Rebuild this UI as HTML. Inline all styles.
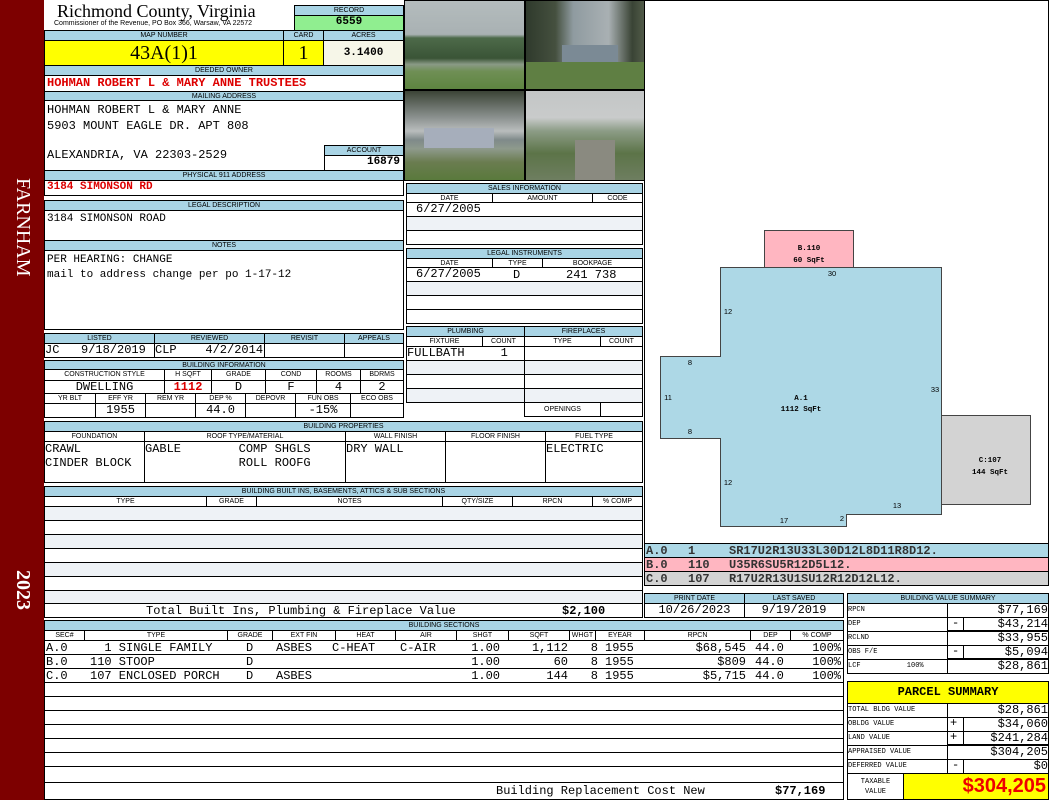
<!DOCTYPE html>
<html><head><meta charset="utf-8"><style>
*{margin:0;padding:0;box-sizing:border-box}
body{width:1050px;height:800px;position:relative;background:#fff;overflow:hidden;font-family:"Liberation Mono",monospace}
div{position:absolute}
.h{background:#a9d4e5;border:1px solid #000;font:7px/9px "Liberation Sans",sans-serif;text-align:center;color:#000;letter-spacing:0}
.c{border:1px solid #000;font-size:11px;line-height:13px;white-space:nowrap}
.r{color:#d00;font-weight:bold}
.s{background:#eef2f6}
.m{font:7px "Liberation Mono",monospace}
.rt{text-align:right}
.ct{text-align:center}
.v{font-size:12px;line-height:14px;white-space:pre}
</style></head><body>
<div style="left:0;top:0;width:44px;height:800px;background:#7d0000"></div>
<div style="left:10px;top:178px;width:24px;height:156px;color:#fff;font:20px 'Liberation Serif',serif;writing-mode:vertical-rl;">FARNHAM</div>
<div style="left:10px;top:570px;width:24px;height:56px;color:#fff;font:bold 20px 'Liberation Serif',serif;writing-mode:vertical-rl;">2023</div>

<div style="left:57px;top:1px;font:18px/20px 'Liberation Serif',serif">Richmond County, Virginia</div>
<div style="left:54px;top:19px;font:7px/9px 'Liberation Sans',sans-serif">Commissioner of the Revenue, PO Box 366, Warsaw, VA 22572</div>
<div class="h" style="left:294px;top:5px;width:110px;height:11px">RECORD</div>
<div class="c" style="left:294px;top:15px;width:110px;height:16px;background:#90ee90;text-align:center;font-weight:bold">6559</div>

<div class="h" style="left:44px;top:30px;width:240px;height:11px">MAP NUMBER</div>
<div class="h" style="left:283px;top:30px;width:41px;height:11px">CARD</div>
<div class="h" style="left:323px;top:30px;width:81px;height:11px">ACRES</div>
<div class="c" style="left:44px;top:40px;width:240px;height:26px;background:#ffff00;font:20px/24px 'Liberation Serif',serif;text-align:center">43A(1)1</div>
<div class="c" style="left:283px;top:40px;width:41px;height:26px;background:#ffff00;font:20px/24px 'Liberation Serif',serif;text-align:center">1</div>
<div class="c" style="left:323px;top:40px;width:81px;height:26px;background:#f6f6e8;text-align:center;font-weight:bold;line-height:24px">3.1400</div>

<div class="h" style="left:44px;top:65px;width:360px;height:11px">DEEDED OWNER</div>
<div class="c r" style="left:44px;top:75px;width:360px;height:17px;font-size:12px;line-height:15px;padding-left:2px">HOHMAN ROBERT L &amp; MARY ANNE TRUSTEES</div>
<div class="h" style="left:44px;top:91px;width:360px;height:10px">MAILING ADDRESS</div>
<div class="c" style="left:44px;top:100px;width:360px;height:71px"></div>
<div class="v" style="left:47px;top:102px;line-height:16px">HOHMAN ROBERT L &amp; MARY ANNE
5903 MOUNT EAGLE DR. APT 808</div>
<div class="v" style="left:47px;top:148px">ALEXANDRIA, VA 22303-2529</div>
<div class="h" style="left:324px;top:145px;width:80px;height:11px">ACCOUNT</div>
<div class="c" style="left:324px;top:155px;width:80px;height:16px;text-align:right;padding-right:3px;font-weight:bold">16879</div>
<div class="h" style="left:44px;top:170px;width:360px;height:11px">PHYSICAL 911 ADDRESS</div>
<div class="c r" style="left:44px;top:180px;width:360px;height:16px;padding-left:2px">3184 SIMONSON RD</div>

<div class="h" style="left:44px;top:200px;width:360px;height:11px">LEGAL DESCRIPTION</div>
<div class="c" style="left:44px;top:210px;width:360px;height:31px;padding:2px">3184 SIMONSON ROAD</div>
<div class="h" style="left:44px;top:240px;width:360px;height:11px">NOTES</div>
<div class="c" style="left:44px;top:250px;width:360px;height:80px;padding:2px;line-height:15px">PER HEARING: CHANGE<br>mail to address change per po 1-17-12</div>

<div class="h" style="left:44px;top:333px;width:111px;height:11px">LISTED</div>
<div class="h" style="left:154px;top:333px;width:111px;height:11px">REVIEWED</div>
<div class="h" style="left:264px;top:333px;width:81px;height:11px">REVISIT</div>
<div class="h" style="left:344px;top:333px;width:60px;height:11px">APPEALS</div>
<div class="c" style="left:44px;top:343px;width:111px;height:15px;font-size:12px">JC &nbsp;&nbsp;9/18/2019</div>
<div class="c" style="left:154px;top:343px;width:111px;height:15px;font-size:12px">CLP &nbsp;&nbsp;&nbsp;4/2/2014</div>
<div class="c" style="left:264px;top:343px;width:81px;height:15px"></div>
<div class="c" style="left:344px;top:343px;width:60px;height:15px"></div>

<div class="h" style="left:44px;top:360px;width:360px;height:10px">BUILDING INFORMATION</div>
<div class="h" style="left:44px;top:369px;width:121px;height:12px;background:#fff">CONSTRUCTION STYLE</div>
<div class="h" style="left:164px;top:369px;width:48px;height:12px;background:#fff">H SQFT</div>
<div class="h" style="left:211px;top:369px;width:55px;height:12px;background:#fff">GRADE</div>
<div class="h" style="left:265px;top:369px;width:52px;height:12px;background:#fff">COND</div>
<div class="h" style="left:316px;top:369px;width:45px;height:12px;background:#fff">ROOMS</div>
<div class="h" style="left:360px;top:369px;width:44px;height:12px;background:#fff">BDRMS</div>
<div class="c ct" style="left:44px;top:380px;width:121px;height:14px;font-size:12px">DWELLING</div>
<div class="c ct r" style="left:164px;top:380px;width:48px;height:14px;font-size:12px">1112</div>
<div class="c ct" style="left:211px;top:380px;width:55px;height:14px;font-size:12px">D</div>
<div class="c ct" style="left:265px;top:380px;width:52px;height:14px;font-size:12px">F</div>
<div class="c ct" style="left:316px;top:380px;width:45px;height:14px;font-size:12px">4</div>
<div class="c ct" style="left:360px;top:380px;width:44px;height:14px;font-size:12px">2</div>
<div class="h" style="left:44px;top:393px;width:52px;height:11px;background:#fff">YR BLT</div>
<div class="h" style="left:95px;top:393px;width:51px;height:11px;background:#fff">EFF YR</div>
<div class="h" style="left:145px;top:393px;width:51px;height:11px;background:#fff">REM YR</div>
<div class="h" style="left:195px;top:393px;width:51px;height:11px;background:#fff">DEP %</div>
<div class="h" style="left:245px;top:393px;width:51px;height:11px;background:#fff">DEPOVR</div>
<div class="h" style="left:295px;top:393px;width:56px;height:11px;background:#fff">FUN OBS</div>
<div class="h" style="left:350px;top:393px;width:54px;height:11px;background:#fff">ECO OBS</div>
<div class="c" style="left:44px;top:403px;width:52px;height:15px"></div>
<div class="c ct" style="left:95px;top:403px;width:51px;height:15px;font-size:12px">1955</div>
<div class="c" style="left:145px;top:403px;width:51px;height:15px"></div>
<div class="c ct" style="left:195px;top:403px;width:51px;height:15px;font-size:12px">44.0</div>
<div class="c" style="left:245px;top:403px;width:51px;height:15px"></div>
<div class="c ct" style="left:295px;top:403px;width:56px;height:15px;font-size:12px">-15%</div>
<div class="c" style="left:350px;top:403px;width:54px;height:15px"></div>

<div style="left:404px;top:0;width:241px;height:181px;background:#000"></div>
<div style="left:405px;top:1px;width:119px;height:88px;background:linear-gradient(180deg,#b4bcbd 0%,#a9b1b3 38%,#4d6a4a 42%,#3a5436 65%,#8a9a86 72%,#6f8f55 80%,#5e8540 100%)"></div>
<div style="left:526px;top:1px;width:118px;height:88px;background:linear-gradient(90deg,#2f3a2c 0%,#45503f 25%,#8f9ba0 40%,#a9b0b3 70%,#3a4435 90%,#505a48 100%)"></div>
<div style="left:562px;top:45px;width:56px;height:26px;background:#7b8a95"></div>
<div style="left:526px;top:62px;width:118px;height:27px;background:#5f7f43"></div>
<div style="left:405px;top:91px;width:119px;height:89px;background:linear-gradient(180deg,#3c4436 0%,#8c9290 30%,#b9bdbd 45%,#7f8a8a 55%,#8e9a8c 65%,#6a7c50 80%,#5a7a3c 100%)"></div>
<div style="left:424px;top:128px;width:70px;height:20px;background:#a6aebb"></div>
<div style="left:526px;top:91px;width:118px;height:89px;background:linear-gradient(180deg,#c3c6c6 0%,#c9cbcb 30%,#8c9c86 45%,#5c7448 70%,#6e7e60 100%)"></div>
<div style="left:575px;top:140px;width:40px;height:40px;background:#8a8a80"></div>

<div class="h" style="left:406px;top:183px;width:237px;height:11px">SALES INFORMATION</div>
<div class="h" style="left:406px;top:193px;width:87px;height:10px;background:#fff">DATE</div>
<div class="h" style="left:492px;top:193px;width:101px;height:10px;background:#fff">AMOUNT</div>
<div class="h" style="left:592px;top:193px;width:51px;height:10px;background:#fff">CODE</div>
<div class="c" style="left:406px;top:202px;width:237px;height:15px;padding-left:9px;font-size:12px">6/27/2005</div>
<div class="c s" style="left:406px;top:216px;width:237px;height:15px"></div>
<div class="c" style="left:406px;top:230px;width:237px;height:15px"></div>
<div class="h" style="left:406px;top:248px;width:237px;height:11px">LEGAL INSTRUMENTS</div>
<div class="h" style="left:406px;top:258px;width:87px;height:10px;background:#fff">DATE</div>
<div class="h" style="left:492px;top:258px;width:51px;height:10px;background:#fff">TYPE</div>
<div class="h" style="left:542px;top:258px;width:101px;height:10px;background:#fff">BOOKPAGE</div>
<div class="c" style="left:406px;top:267px;width:237px;height:15px;padding-left:9px;font-size:12px">6/27/2005</div>
<div class="v" style="left:513px;top:268px">D</div>
<div class="v" style="left:566px;top:268px">241 738</div>
<div class="c s" style="left:406px;top:281px;width:237px;height:15px"></div>
<div class="c" style="left:406px;top:295px;width:237px;height:15px"></div>
<div class="c" style="left:406px;top:309px;width:237px;height:15px"></div>

<div class="h" style="left:406px;top:326px;width:119px;height:11px">PLUMBING</div>
<div class="h" style="left:524px;top:326px;width:119px;height:11px">FIREPLACES</div>
<div class="h" style="left:406px;top:336px;width:77px;height:11px;background:#fff">FIXTURE</div>
<div class="h" style="left:482px;top:336px;width:43px;height:11px;background:#fff">COUNT</div>
<div class="h" style="left:524px;top:336px;width:77px;height:11px;background:#fff">TYPE</div>
<div class="h" style="left:600px;top:336px;width:43px;height:11px;background:#fff">COUNT</div>
<div class="c" style="left:406px;top:346px;width:119px;height:15px;font-size:12px;white-space:pre">FULLBATH     1</div>
<div class="c" style="left:524px;top:346px;width:119px;height:15px"></div>
<div class="c s" style="left:406px;top:360px;width:119px;height:15px"></div>
<div class="c s" style="left:524px;top:360px;width:119px;height:15px"></div>
<div class="c" style="left:406px;top:374px;width:119px;height:15px"></div>
<div class="c" style="left:524px;top:374px;width:119px;height:15px"></div>
<div class="c s" style="left:406px;top:388px;width:119px;height:15px"></div>
<div class="c s" style="left:524px;top:388px;width:119px;height:15px"></div>
<div class="h" style="left:524px;top:402px;width:77px;height:15px;background:#fff;line-height:13px">OPENINGS</div>
<div class="c" style="left:600px;top:402px;width:43px;height:15px"></div>

<div class="h" style="left:44px;top:421px;width:599px;height:11px">BUILDING PROPERTIES</div>
<div class="h" style="left:44px;top:431px;width:101px;height:11px;background:#fff">FOUNDATION</div>
<div class="h" style="left:144px;top:431px;width:202px;height:11px;background:#fff">ROOF TYPE/MATERIAL</div>
<div class="h" style="left:345px;top:431px;width:101px;height:11px;background:#fff">WALL FINISH</div>
<div class="h" style="left:445px;top:431px;width:101px;height:11px;background:#fff">FLOOR FINISH</div>
<div class="h" style="left:545px;top:431px;width:98px;height:11px;background:#fff">FUEL TYPE</div>
<div class="c" style="left:44px;top:441px;width:101px;height:42px;font-size:12px;line-height:14px">CRAWL<br>CINDER BLOCK</div>
<div class="c" style="left:144px;top:441px;width:202px;height:42px;font-size:12px;line-height:14px;white-space:pre">GABLE        COMP SHGLS
             ROLL ROOFG</div>
<div class="c" style="left:345px;top:441px;width:101px;height:42px;font-size:12px;line-height:14px">DRY WALL</div>
<div class="c" style="left:445px;top:441px;width:101px;height:42px"></div>
<div class="c" style="left:545px;top:441px;width:98px;height:42px;font-size:12px;line-height:14px">ELECTRIC</div>

<div class="h" style="left:44px;top:486px;width:599px;height:11px">BUILDING BUILT INS, BASEMENTS, ATTICS &amp; SUB SECTIONS</div>
<div class="h" style="left:44px;top:496px;width:163px;height:11px;background:#fff">TYPE</div>
<div class="h" style="left:206px;top:496px;width:51px;height:11px;background:#fff">GRADE</div>
<div class="h" style="left:256px;top:496px;width:187px;height:11px;background:#fff">NOTES</div>
<div class="h" style="left:442px;top:496px;width:71px;height:11px;background:#fff">QTY/SIZE</div>
<div class="h" style="left:512px;top:496px;width:81px;height:11px;background:#fff">RPCN</div>
<div class="h" style="left:592px;top:496px;width:51px;height:11px;background:#fff">% COMP</div>
<div class="c s" style="left:44px;top:506px;width:599px;height:15px"></div>
<div class="c" style="left:44px;top:520px;width:599px;height:15px"></div>
<div class="c s" style="left:44px;top:534px;width:599px;height:15px"></div>
<div class="c" style="left:44px;top:548px;width:599px;height:15px"></div>
<div class="c s" style="left:44px;top:562px;width:599px;height:15px"></div>
<div class="c" style="left:44px;top:576px;width:599px;height:15px"></div>
<div class="c s" style="left:44px;top:590px;width:599px;height:14px"></div>
<div class="c" style="left:44px;top:603px;width:599px;height:15px"></div>
<div class="v" style="left:146px;top:604px">Total Built Ins, Plumbing &amp; Fireplace Value</div>
<div class="v" style="left:562px;top:604px;font-weight:bold">$2,100</div>

<div class="h" style="left:44px;top:620px;width:800px;height:11px">BUILDING SECTIONS</div>
<div class="h" style="left:44px;top:630px;width:41px;height:11px;background:#fff">SEC#</div>
<div class="h" style="left:84px;top:630px;width:144px;height:11px;background:#fff">TYPE</div>
<div class="h" style="left:227px;top:630px;width:46px;height:11px;background:#fff">GRADE</div>
<div class="h" style="left:272px;top:630px;width:64px;height:11px;background:#fff">EXT FIN</div>
<div class="h" style="left:335px;top:630px;width:61px;height:11px;background:#fff">HEAT</div>
<div class="h" style="left:395px;top:630px;width:62px;height:11px;background:#fff">AIR</div>
<div class="h" style="left:456px;top:630px;width:53px;height:11px;background:#fff">SHGT</div>
<div class="h" style="left:508px;top:630px;width:62px;height:11px;background:#fff">SQFT</div>
<div class="h" style="left:569px;top:630px;width:27px;height:11px;background:#fff">WHGT</div>
<div class="h" style="left:595px;top:630px;width:50px;height:11px;background:#fff">EYEAR</div>
<div class="h" style="left:644px;top:630px;width:107px;height:11px;background:#fff">RPCN</div>
<div class="h" style="left:750px;top:630px;width:41px;height:11px;background:#fff">DEP</div>
<div class="h" style="left:790px;top:630px;width:54px;height:11px;background:#fff">% COMP</div>
<div class="c" style="left:44px;top:640px;width:800px;height:15px"></div>
<div class="c" style="left:44px;top:654px;width:800px;height:15px"></div>
<div class="c" style="left:44px;top:668px;width:800px;height:15px"></div>

<div class="v" style="left:46px;top:641px">A.0</div><div class="v" style="left:90px;top:641px">  1 SINGLE FAMILY</div>
<div class="v" style="left:246px;top:641px">D</div><div class="v" style="left:276px;top:641px">ASBES</div>
<div class="v" style="left:332px;top:641px">C-HEAT</div><div class="v" style="left:400px;top:641px">C-AIR</div>
<div class="v rt" style="left:440px;top:641px;width:60px">1.00</div><div class="v rt" style="left:500px;top:641px;width:68px">1,112</div>
<div class="v rt" style="left:570px;top:641px;width:28px">8</div><div class="v" style="left:605px;top:641px">1955</div>
<div class="v rt" style="left:650px;top:641px;width:96px">$68,545</div><div class="v" style="left:755px;top:641px">44.0</div>
<div class="v rt" style="left:790px;top:641px;width:51px">100%</div>

<div class="v" style="left:46px;top:655px">B.0</div><div class="v" style="left:90px;top:655px">110 STOOP</div>
<div class="v" style="left:246px;top:655px">D</div>
<div class="v rt" style="left:440px;top:655px;width:60px">1.00</div><div class="v rt" style="left:500px;top:655px;width:68px">60</div>
<div class="v rt" style="left:570px;top:655px;width:28px">8</div><div class="v" style="left:605px;top:655px">1955</div>
<div class="v rt" style="left:650px;top:655px;width:96px">$809</div><div class="v" style="left:755px;top:655px">44.0</div>
<div class="v rt" style="left:790px;top:655px;width:51px">100%</div>

<div class="v" style="left:46px;top:669px">C.0</div><div class="v" style="left:90px;top:669px">107 ENCLOSED PORCH</div>
<div class="v" style="left:246px;top:669px">D</div><div class="v" style="left:276px;top:669px">ASBES</div>
<div class="v rt" style="left:440px;top:669px;width:60px">1.00</div><div class="v rt" style="left:500px;top:669px;width:68px">144</div>
<div class="v rt" style="left:570px;top:669px;width:28px">8</div><div class="v" style="left:605px;top:669px">1955</div>
<div class="v rt" style="left:650px;top:669px;width:96px">$5,715</div><div class="v" style="left:755px;top:669px">44.0</div>
<div class="v rt" style="left:790px;top:669px;width:51px">100%</div>

<div class="c" style="left:44px;top:682px;width:800px;height:15px"></div>
<div class="c" style="left:44px;top:696px;width:800px;height:15px"></div>
<div class="c" style="left:44px;top:710px;width:800px;height:15px"></div>
<div class="c" style="left:44px;top:724px;width:800px;height:15px"></div>
<div class="c" style="left:44px;top:738px;width:800px;height:15px"></div>
<div class="c" style="left:44px;top:752px;width:800px;height:15px"></div>
<div class="c" style="left:44px;top:766px;width:800px;height:17px"></div>
<div class="c" style="left:44px;top:782px;width:800px;height:18px"></div>
<div class="v" style="left:496px;top:784px">Building Replacement Cost New</div>
<div class="v" style="left:775px;top:784px;font-weight:bold">$77,169</div>

<div style="left:644px;top:0;width:405px;height:546px;border:1px solid #000"></div>
<svg style="position:absolute;left:0;top:0" width="1050" height="560" font-family="Liberation Sans, sans-serif" font-size="7.5" text-anchor="middle">
<rect x="764.5" y="230.5" width="89" height="37" fill="#ffb6c1" stroke="#444"/>
<polygon points="720.5,267.5 941.5,267.5 941.5,514.5 846.5,514.5 846.5,526.5 720.5,526.5 720.5,438.5 660.5,438.5 660.5,356.5 720.5,356.5" fill="#add8e6" stroke="#444"/>
<rect x="941.5" y="415.5" width="89" height="89" fill="#d3d3d3" stroke="#444"/>
<g font-family="Liberation Mono, monospace" font-weight="bold" font-size="7.5">
<text x="809" y="250">B.110</text><text x="809" y="262">60 SqFt</text>
<text x="801" y="400">A.1</text><text x="801" y="411">1112 SqFt</text>
<text x="990" y="462">C:107</text><text x="990" y="474">144 SqFt</text></g>
<text x="832" y="276">30</text><text x="728" y="314">12</text><text x="690" y="365">8</text>
<text x="668" y="400">11</text><text x="935" y="392">33</text><text x="690" y="434">8</text>
<text x="728" y="485">12</text><text x="784" y="523">17</text><text x="842" y="521">2</text><text x="897" y="508">13</text>
</svg>
<div class="c" style="left:644px;top:543px;width:405px;height:15px;background:#add8e6"></div>
<div class="c" style="left:644px;top:557px;width:405px;height:15px;background:#ffb6c1"></div>
<div class="c" style="left:644px;top:571px;width:405px;height:15px;background:#d3d3d3"></div>
<div class="v" style="left:646px;top:544px;font-weight:bold;color:#333">A.0</div><div class="v" style="left:688px;top:544px;font-weight:bold;color:#333">1</div><div class="v" style="left:729px;top:544px;font-weight:bold;color:#333">SR17U2R13U33L30D12L8D11R8D12.</div>
<div class="v" style="left:646px;top:558px;font-weight:bold;color:#333">B.0</div><div class="v" style="left:688px;top:558px;font-weight:bold;color:#333">110</div><div class="v" style="left:729px;top:558px;font-weight:bold;color:#333">U35R6SU5R12D5L12.</div>
<div class="v" style="left:646px;top:572px;font-weight:bold;color:#333">C.0</div><div class="v" style="left:688px;top:572px;font-weight:bold;color:#333">107</div><div class="v" style="left:729px;top:572px;font-weight:bold;color:#333">R17U2R13U1SU12R12D12L12.</div>

<div class="h" style="left:644px;top:593px;width:101px;height:11px">PRINT DATE</div>
<div class="h" style="left:744px;top:593px;width:100px;height:11px">LAST SAVED</div>
<div class="c ct" style="left:644px;top:603px;width:101px;height:15px;font-size:12px">10/26/2023</div>
<div class="c ct" style="left:744px;top:603px;width:100px;height:15px;font-size:12px">9/19/2019</div>

<div class="h" style="left:847px;top:593px;width:202px;height:11px">BUILDING VALUE SUMMARY</div>
<div class="c m" style="left:847px;top:603px;width:101px;height:15px;line-height:13px">RPCN</div>
<div class="c rt" style="left:947px;top:603px;width:102px;height:15px;font-size:12px">$77,169</div>
<div class="c m" style="left:847px;top:617px;width:101px;height:15px;line-height:13px">DEP</div>
<div class="c rt" style="left:947px;top:617px;width:102px;height:15px;font-size:12px;border-bottom:2px solid #000">$43,214</div>
<div style="left:952px;top:616px;font-size:12px">-</div>
<div style="left:963px;top:617px;width:1px;height:14px;background:#000"></div>
<div class="c m" style="left:847px;top:631px;width:101px;height:15px;line-height:13px">RCLND</div>
<div class="c rt" style="left:947px;top:631px;width:102px;height:15px;font-size:12px">$33,955</div>
<div class="c m" style="left:847px;top:645px;width:101px;height:15px;line-height:13px">OBS F/E</div>
<div class="c rt" style="left:947px;top:645px;width:102px;height:15px;font-size:12px;border-bottom:2px solid #000">$5,094</div>
<div style="left:952px;top:644px;font-size:12px">-</div>
<div style="left:963px;top:645px;width:1px;height:14px;background:#000"></div>
<div class="c m" style="left:847px;top:659px;width:101px;height:15px;line-height:13px;white-space:pre">LCF           100%</div>
<div class="c rt" style="left:947px;top:659px;width:102px;height:15px;font-size:12px">$28,861</div>

<div class="c" style="left:847px;top:681px;width:202px;height:23px;background:#ffff00;text-align:center;font-weight:bold;font-size:12px;line-height:20px">PARCEL SUMMARY</div>
<div class="c m" style="left:847px;top:703px;width:101px;height:15px;line-height:13px">TOTAL BLDG VALUE</div>
<div class="c rt" style="left:947px;top:703px;width:102px;height:15px;font-size:12px">$28,861</div>
<div class="c m" style="left:847px;top:717px;width:101px;height:15px;line-height:13px">OBLDG VALUE</div>
<div class="c rt" style="left:947px;top:717px;width:102px;height:15px;font-size:12px">$34,060</div>
<div style="left:950px;top:716px;font-size:12px">+</div>
<div class="c m" style="left:847px;top:731px;width:101px;height:15px;line-height:13px">LAND VALUE</div>
<div class="c rt" style="left:947px;top:731px;width:102px;height:15px;font-size:12px;border-bottom:2px solid #000">$241,284</div>
<div style="left:950px;top:730px;font-size:12px">+</div>
<div style="left:963px;top:717px;width:1px;height:28px;background:#000"></div>
<div class="c m" style="left:847px;top:745px;width:101px;height:15px;line-height:13px">APPRAISED VALUE</div>
<div class="c rt" style="left:947px;top:745px;width:102px;height:15px;font-size:12px">$304,205</div>
<div class="c m" style="left:847px;top:759px;width:101px;height:15px;line-height:13px">DEFERRED VALUE</div>
<div class="c rt" style="left:947px;top:759px;width:102px;height:15px;font-size:12px">$0</div>
<div style="left:952px;top:758px;font-size:12px">-</div>
<div style="left:963px;top:759px;width:1px;height:14px;background:#000"></div>
<div class="c m" style="left:847px;top:773px;width:57px;height:27px;text-align:center;line-height:10px;padding-top:3px;white-space:normal">TAXABLE<br>VALUE</div>
<div class="c" style="left:903px;top:773px;width:146px;height:27px;background:#ffff00;color:#e00;font:bold 20px/25px 'Liberation Sans',sans-serif;text-align:right;padding-right:2px">$304,205</div>
</body></html>
